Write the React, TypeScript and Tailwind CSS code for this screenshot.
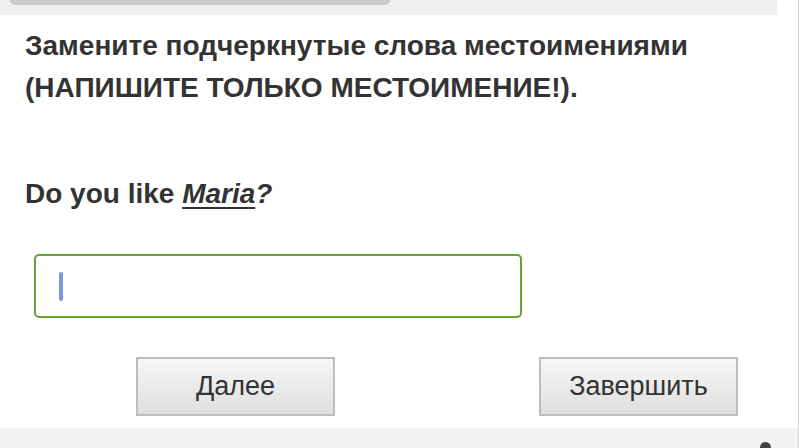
function NavButton({ label }: { label: string }) {
  return (
    <button
      type="button"
      className="w-[199px] h-[59px] border-2 border-[#bdbdbd] bg-gradient-to-b from-[#f7f7f7] to-[#dedede] text-[27px] text-[#333] leading-none"
    >
      {label}
    </button>
  );
}

export default function App() {
  return (
    <div className="font-[family-name:'Liberation_Sans',Arial,sans-serif] relative w-[799px] h-[448px] overflow-hidden bg-white border-r border-[#d4d4d4] flex flex-col">
      {/* Top band with scrolled-off control */}
      <div className="w-[777px] h-[15px] bg-[#efefef] shrink-0">
        <div className="ml-[10px] w-[380px] h-[5px] rounded-b-full bg-[#c9c9c9]" />
      </div>

      <div className="flex-1 pl-[25px]">
        {/* Instruction */}
        <h1 className="mt-[10px] text-[28px] font-bold leading-[42px] text-[#333]">
          Замените подчеркнутые слова местоимениями
          <br />
          (НАПИШИТЕ ТОЛЬКО МЕСТОИМЕНИЕ!).
        </h1>

        {/* Question */}
        <p className="mt-[64px] text-[28px] font-bold leading-[42px] text-[#333]">
          Do you like{' '}
          <em className="underline decoration-2 underline-offset-[4px]">Maria</em>
          <em>?</em>
        </p>

        {/* Answer field */}
        <div className="mt-[39px] ml-[9px] w-[488px] h-[64px] rounded-[5px] border-2 border-[#67a033] flex items-center pl-[23px]">
          <span className="w-[4px] h-[29px] rounded-full bg-[#7b97e3]" />
        </div>

        {/* Buttons */}
        <div className="mt-[39px] flex gap-[204px] ml-[111px]">
          <NavButton label="Далее" />
          <NavButton label="Завершить" />
        </div>
      </div>

      {/* Footer band */}
      <div className="relative h-[20px] bg-[#f2f2f3] shrink-0">
        <span className="absolute left-[760px] top-[14px] w-[11px] h-[11px] rounded-full bg-[#444]" />
      </div>
    </div>
  );
}
